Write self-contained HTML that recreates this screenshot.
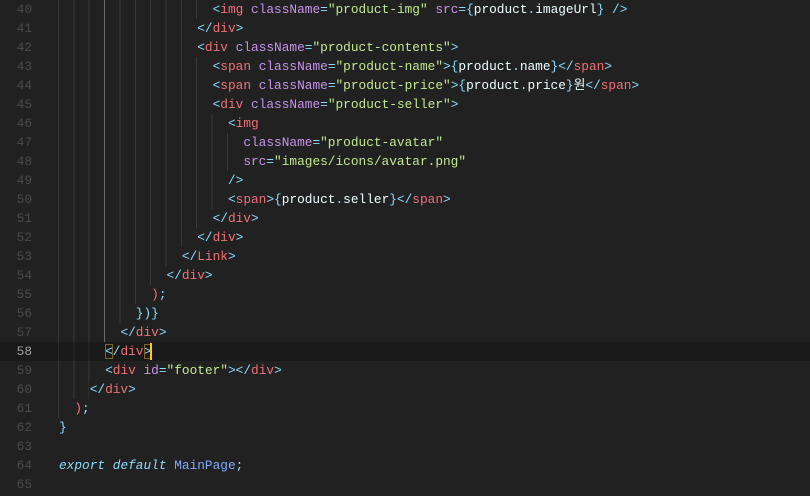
<!DOCTYPE html>
<html><head><meta charset="utf-8"><style>
body{margin:0;width:810px;height:496px;background:#212121;overflow:hidden;font-family:"Liberation Mono","Noto Sans CJK KR",monospace;font-size:12.8px;}
.l{position:absolute;left:0;width:810px;height:19px;line-height:19px;}
.n{position:absolute;left:0;width:32px;text-align:right;color:#4b4b4b;}
.c{position:absolute;left:59px;white-space:pre;color:#eeffff;}
.g{position:absolute;left:58px;top:0;height:19px;background:repeating-linear-gradient(to right,#3a3a3a 0 1px,transparent 1px 15.36px);}
.cur{background:#191919;}
.cur .n{color:#a0a0a0}
.b{color:#89ddff}.t{color:#f07178}.a{color:#c792ea}.s{color:#c3e88d}.k{color:#89ddff;font-style:italic}.f{color:#82aaff}.r{color:#f07178}
</style></head><body>
<div class="l" style="top:0"><span class="n">40</span><span class="g" style="width:153px"></span><span class="c">                    <span class="b">&lt;</span><span class="t">img</span> <span class="a">className</span><span class="b">=</span><span class="s">"product-img"</span> <span class="a">src</span><span class="b">={</span>product<span class="b">.</span>imageUrl<span class="b">}</span> <span class="b">/&gt;</span></span></div>
<div class="l" style="top:19px"><span class="n">41</span><span class="g" style="width:138px"></span><span class="c">                  <span class="b">&lt;/</span><span class="t">div</span><span class="b">&gt;</span></span></div>
<div class="l" style="top:38px"><span class="n">42</span><span class="g" style="width:138px"></span><span class="c">                  <span class="b">&lt;</span><span class="t">div</span> <span class="a">className</span><span class="b">=</span><span class="s">"product-contents"</span><span class="b">&gt;</span></span></div>
<div class="l" style="top:57px"><span class="n">43</span><span class="g" style="width:153px"></span><span class="c">                    <span class="b">&lt;</span><span class="t">span</span> <span class="a">className</span><span class="b">=</span><span class="s">"product-name"</span><span class="b">&gt;{</span>product<span class="b">.</span>name<span class="b">}&lt;/</span><span class="t">span</span><span class="b">&gt;</span></span></div>
<div class="l" style="top:76px"><span class="n">44</span><span class="g" style="width:153px"></span><span class="c">                    <span class="b">&lt;</span><span class="t">span</span> <span class="a">className</span><span class="b">=</span><span class="s">"product-price"</span><span class="b">&gt;{</span>product<span class="b">.</span>price<span class="b">}</span>원<span class="b">&lt;/</span><span class="t">span</span><span class="b">&gt;</span></span></div>
<div class="l" style="top:95px"><span class="n">45</span><span class="g" style="width:153px"></span><span class="c">                    <span class="b">&lt;</span><span class="t">div</span> <span class="a">className</span><span class="b">=</span><span class="s">"product-seller"</span><span class="b">&gt;</span></span></div>
<div class="l" style="top:114px"><span class="n">46</span><span class="g" style="width:169px"></span><span class="c">                      <span class="b">&lt;</span><span class="t">img</span></span></div>
<div class="l" style="top:133px"><span class="n">47</span><span class="g" style="width:184px"></span><span class="c">                        <span class="a">className</span><span class="b">=</span><span class="s">"product-avatar"</span></span></div>
<div class="l" style="top:152px"><span class="n">48</span><span class="g" style="width:184px"></span><span class="c">                        <span class="a">src</span><span class="b">=</span><span class="s">"images/icons/avatar.png"</span></span></div>
<div class="l" style="top:171px"><span class="n">49</span><span class="g" style="width:169px"></span><span class="c">                      <span class="b">/&gt;</span></span></div>
<div class="l" style="top:190px"><span class="n">50</span><span class="g" style="width:169px"></span><span class="c">                      <span class="b">&lt;</span><span class="t">span</span><span class="b">&gt;{</span>product<span class="b">.</span>seller<span class="b">}&lt;/</span><span class="t">span</span><span class="b">&gt;</span></span></div>
<div class="l" style="top:209px"><span class="n">51</span><span class="g" style="width:153px"></span><span class="c">                    <span class="b">&lt;/</span><span class="t">div</span><span class="b">&gt;</span></span></div>
<div class="l" style="top:228px"><span class="n">52</span><span class="g" style="width:138px"></span><span class="c">                  <span class="b">&lt;/</span><span class="t">div</span><span class="b">&gt;</span></span></div>
<div class="l" style="top:247px"><span class="n">53</span><span class="g" style="width:123px"></span><span class="c">                <span class="b">&lt;/</span><span class="t">Link</span><span class="b">&gt;</span></span></div>
<div class="l" style="top:266px"><span class="n">54</span><span class="g" style="width:107px"></span><span class="c">              <span class="b">&lt;/</span><span class="t">div</span><span class="b">&gt;</span></span></div>
<div class="l" style="top:285px"><span class="n">55</span><span class="g" style="width:92px"></span><span class="c">            <span class="r">)</span><span class="b">;</span></span></div>
<div class="l" style="top:304px"><span class="n">56</span><span class="g" style="width:77px"></span><span class="c">          <span class="b">})}</span></span></div>
<div class="l" style="top:323px"><span class="n">57</span><span class="g" style="width:61px"></span><span class="c">        <span class="b">&lt;/</span><span class="t">div</span><span class="b">&gt;</span></span></div>
<div class="l cur" style="top:342px"><span class="n">58</span><span class="g" style="width:46px;opacity:.5"></span><span class="c">      <span class="b" style="outline:1px solid #7a6526;outline-offset:-1px">&lt;</span><span class="b">/</span><span class="t">div</span><span class="b" style="outline:1px solid #7a6526;outline-offset:-1px">&gt;</span></span><span style="position:absolute;left:150px;top:1px;width:2px;height:17px;background:#ffcc00"></span></div>
<div class="l" style="top:361px"><span class="n">59</span><span class="g" style="width:46px"></span><span class="c">      <span class="b">&lt;</span><span class="t">div</span> <span class="a">id</span><span class="b">=</span><span class="s">"footer"</span><span class="b">&gt;&lt;/</span><span class="t">div</span><span class="b">&gt;</span></span></div>
<div class="l" style="top:380px"><span class="n">60</span><span class="g" style="width:31px"></span><span class="c">    <span class="b">&lt;/</span><span class="t">div</span><span class="b">&gt;</span></span></div>
<div class="l" style="top:399px"><span class="n">61</span><span class="g" style="width:15px"></span><span class="c">  <span class="r">)</span><span class="b">;</span></span></div>
<div class="l" style="top:418px"><span class="n">62</span><span class="c"><span class="b">}</span></span></div>
<div class="l" style="top:437px"><span class="n">63</span></div>
<div class="l" style="top:456px"><span class="n">64</span><span class="c"><span class="k">export</span> <span class="k">default</span> <span class="f">MainPage</span><span class="b">;</span></span></div>
<div class="l" style="top:475px"><span class="n">65</span></div>
<div style="position:absolute;left:104px;top:0;width:1px;height:342px;background:#6a6a6a"></div>
</body></html>
